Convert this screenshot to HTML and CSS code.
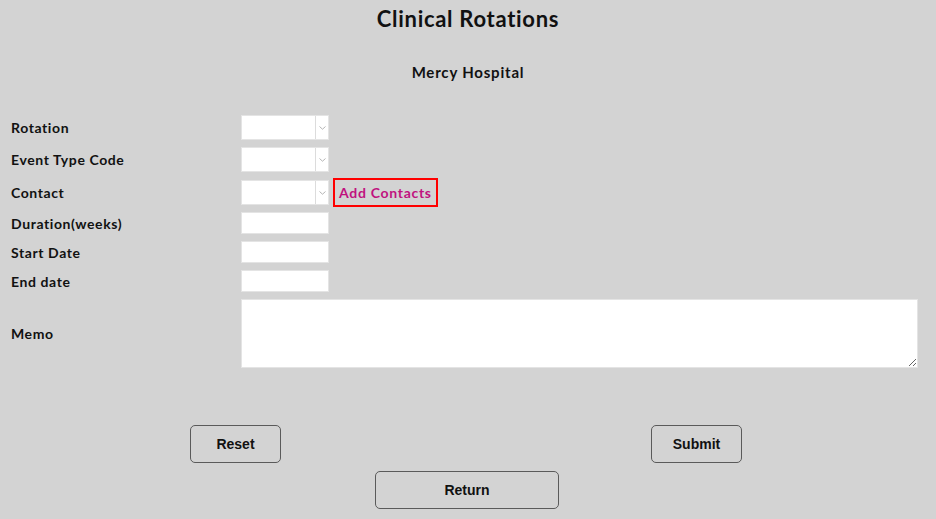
FILE: index.html
```html
<!DOCTYPE html>
<html lang="en">
<head>
<meta charset="utf-8">
<title>Clinical Rotations</title>
<link rel="stylesheet" href="styles.css">
</head>
<body>
<div class="page">
  <h1 class="title">Clinical Rotations</h1>
  <h2 class="subtitle">Mercy Hospital</h2>

  <form class="form">
    <label class="lbl">Rotation</label>
    <div class="field">
      <div class="sel"><select></select><span class="arrow"><svg width="7" height="4" viewBox="0 0 7 4"><path d="M0.5 0.5 L3.5 3.2 L6.5 0.5" fill="none" stroke="#b5b5b5" stroke-width="1"/></svg></span></div>
    </div>

    <label class="lbl">Event Type Code</label>
    <div class="field">
      <div class="sel"><select></select><span class="arrow"><svg width="7" height="4" viewBox="0 0 7 4"><path d="M0.5 0.5 L3.5 3.2 L6.5 0.5" fill="none" stroke="#b5b5b5" stroke-width="1"/></svg></span></div>
    </div>

    <label class="lbl">Contact</label>
    <div class="field contact">
      <div class="sel"><select></select><span class="arrow"><svg width="7" height="4" viewBox="0 0 7 4"><path d="M0.5 0.5 L3.5 3.2 L6.5 0.5" fill="none" stroke="#b5b5b5" stroke-width="1"/></svg></span></div>
      <a class="add" href="#">Add Contacts</a>
    </div>

    <label class="lbl">Duration(weeks)</label>
    <div class="field"><input class="txt" type="text"></div>

    <label class="lbl">Start Date</label>
    <div class="field"><input class="txt" type="text"></div>

    <label class="lbl">End date</label>
    <div class="field"><input class="txt" type="text"></div>

    <label class="lbl">Memo</label>
    <div class="field"><textarea class="memo"></textarea></div>
  </form>

  <div class="actions">
    <div class="half"><button class="btn small" type="button">Reset</button></div>
    <div class="half"><button class="btn small" type="button">Submit</button></div>
  </div>
  <div class="return-row">
    <button class="btn wide" type="button">Return</button>
  </div>
</div>
</body>
</html>
```

FILE: styles.css
```css
html, body {
  margin: 0;
  padding: 0;
  background: #d3d3d3;
}

body {
  font-family: Lato, "Noto Sans", sans-serif;
  color: #111;
}

.page {
  width: 936px;
  height: 519px;
  overflow: hidden;
}

.title {
  margin: 0;
  padding-top: 6px;
  text-align: center;
  font-size: 22px;
  font-weight: 700;
  line-height: 25px;
  letter-spacing: 0.7px;
}

.subtitle {
  margin: 0;
  padding-top: 31px;
  text-align: center;
  font-size: 15px;
  font-weight: 700;
  line-height: 20px;
  letter-spacing: 0.8px;
}

.form {
  display: grid;
  grid-template-columns: 230px 1fr;
  row-gap: 7px;
  align-items: center;
  margin-top: 33px;
  padding-left: 11px;
  padding-right: 18px;
}

.lbl {
  font-size: 14px;
  font-weight: 700;
  color: #111;
  letter-spacing: 0.6px;
}

.field {
  display: flex;
  align-items: center;
}

.sel {
  display: flex;
  width: 88px;
  height: 25px;
  box-sizing: border-box;
  background: #fff;
  border: 1px solid #e4e4e4;
}

.sel select {
  appearance: none;
  -webkit-appearance: none;
  border: 0;
  outline: 0;
  background: #fff;
  width: 73px;
  height: 100%;
  margin: 0;
  padding: 0;
}

.arrow {
  flex: 1;
  display: flex;
  align-items: center;
  justify-content: center;
  border-left: 1px solid #dcdcdc;
  padding-top: 1px;
}

.contact {
  height: 26px;
}

.add {
  margin-left: 4px;
  margin-top: -2px;
  margin-bottom: -2px;
  height: 29px;
  box-sizing: border-box;
  padding: 0 4px 0 4px;
  border: 2px solid #ff0000;
  display: flex;
  align-items: center;
  color: #c0127f;
  font-size: 14px;
  font-weight: 700;
  letter-spacing: 0.7px;
  text-decoration: none;
}

.txt {
  width: 88px;
  height: 22px;
  box-sizing: border-box;
  border: 1px solid #e4e4e4;
  background: #fff;
  margin: 0;
  padding: 0 3px;
  outline: 0;
}

.memo {
  width: 677px;
  height: 69px;
  box-sizing: border-box;
  border: 1px solid #e4e4e4;
  background: #fff;
  margin: 0;
  padding: 2px;
  outline: 0;
  resize: both;
}

.actions {
  display: flex;
  width: 922px;
  margin-left: 5px;
  margin-top: 57px;
}

.half {
  flex: 1;
  display: flex;
  justify-content: center;
}

.btn {
  font-family: "Liberation Sans", Arial, sans-serif;
  font-size: 14px;
  font-weight: 700;
  color: #111;
  background: #d3d3d3;
  border: 1px solid #5a5a5a;
  border-radius: 5px;
  height: 38px;
  margin: 0;
  padding: 0;
}

.btn.small {
  width: 91px;
}

.return-row {
  display: flex;
  justify-content: center;
  width: 922px;
  margin-left: 6px;
  margin-top: 8px;
}

.btn.wide {
  width: 184px;
}
```
